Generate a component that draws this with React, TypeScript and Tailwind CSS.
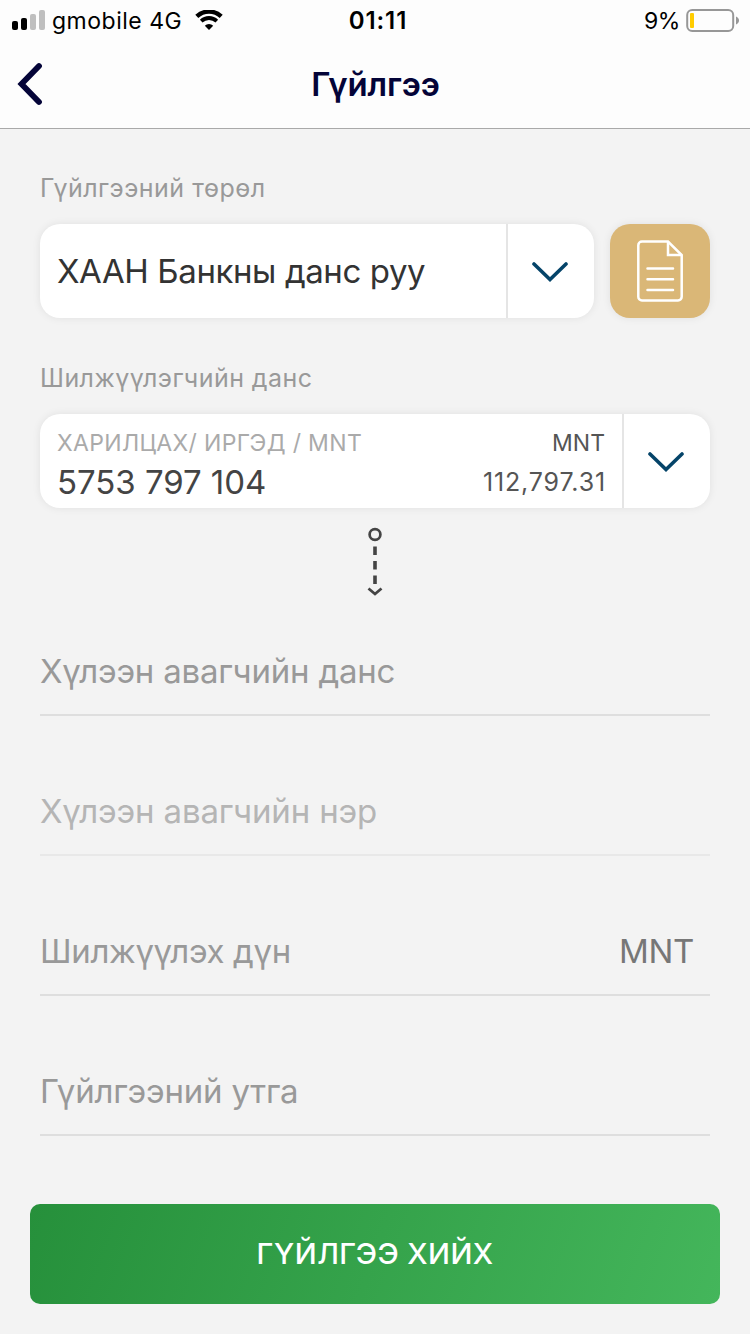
import { clsx } from "clsx";

const FIELDS = [
  { label: "Хүлээн авагчийн данс", suffix: "", muted: false, className: "tracking-[-0.2px]" },
  { label: "Хүлээн авагчийн нэр", suffix: "", muted: true, className: "tracking-[-0.15px]" },
  { label: "Шилжүүлэх дүн", suffix: "MNT", muted: false, className: "tracking-[-0.35px]" },
  { label: "Гүйлгээний утга", suffix: "", muted: false, className: "tracking-[-0.2px]" },
] as const;

function StatusBar() {
  return (
    <div className="grid h-10 grid-cols-3 items-center text-[23px] leading-[38px] text-black">
      <div className="flex items-center pl-3">
        <svg width="33" height="20" viewBox="0 0 33 20">
          <rect x="0" y="11" width="6" height="9" rx="2" fill="#000" />
          <rect x="9" y="8" width="6" height="12" rx="2" fill="#000" />
          <rect x="18" y="4" width="6" height="16" rx="2" fill="#bfbfbf" />
          <rect x="27" y="0" width="6" height="20" rx="2" fill="#bfbfbf" />
        </svg>
        <span className="ml-[7px] whitespace-nowrap pt-0.5 tracking-[0.5px]">gmobile 4G</span>
        <svg className="ml-3" width="30" height="20" viewBox="0 0 30 20">
          <path d="M2.800 6.400a17.800 17.800 0 0 1 24.400 0" fill="none" stroke="#000" strokeWidth="4.400" />
          <path d="M7.200 11.100a11.400 11.400 0 0 1 15.600 0" fill="none" stroke="#000" strokeWidth="3.800" />
          <path d="M15 20l-4.200-4.200a5.900 5.900 0 0 1 8.400 0z" fill="#000" />
        </svg>
      </div>
      <div className="pl-1.5 pt-0.5 text-center text-[24px] font-semibold leading-[38px] tracking-[0.9px]">01:11</div>
      <div className="flex items-center justify-end pr-2.5">
        <span className="mr-1.5 pt-0.5 tracking-[-0.4px]">9%</span>
        <svg width="54" height="24" viewBox="0 0 54 24">
          <rect x="1.200" y="2" width="46" height="21" rx="5" fill="none" stroke="#979797" strokeWidth="2" />
          <rect x="4" y="5" width="4" height="15" rx="1" fill="#ffcc00" />
          <path d="M50 8.500c2 .8 3 2.300 3 4s-1 3.200-3 4z" fill="#979797" />
        </svg>
      </div>
    </div>
  );
}

function Header() {
  return (
    <header className="h-[129px] border-b border-[#a9a9a9] bg-[#fdfdfd]">
      <StatusBar />
      <div className="grid h-[88px] grid-cols-[1fr_auto_1fr] items-center">
        <svg className="ml-4" width="30" height="44" viewBox="0 0 30 44">
          <path d="M23 4L5.500 22 23 40" fill="none" stroke="#040438" strokeWidth="5.800" strokeLinecap="round" strokeLinejoin="miter" />
        </svg>
        <h1 className="pl-px text-[33px] font-semibold leading-[88px] tracking-[-0.1px] text-[#040438]">Гүйлгээ</h1>
      </div>
    </header>
  );
}

function DropdownArrow() {
  return (
    <div className="flex w-[88px] items-center justify-center border-l-2 border-[#e5e5e5] pr-0.5 pt-0.5">
      <svg width="36" height="20" viewBox="0 0 36 20">
        <path d="M2 2l16 15.500L34 2" fill="none" stroke="#054469" strokeWidth="3.600" strokeLinecap="round" strokeLinejoin="miter" />
      </svg>
    </div>
  );
}

function TemplateButton() {
  return (
    <button className="flex h-[94px] w-[100px] items-center justify-center rounded-[20px] bg-[#dab777] shadow-[0_0_8px_rgba(0,0,0,0.08)]">
      <svg width="46" height="62" viewBox="0 0 46 62" fill="none" stroke="#fff" strokeWidth="2.500">
        <path d="M31 1.500H5a3.700 3.700 0 0 0-3.700 3.700v51.600A3.700 3.700 0 0 0 5 60.500h36a3.700 3.700 0 0 0 3.700-3.700V15z" />
        <path d="M31 1.500V15h13.700" />
        <path d="M10.500 28.500h25.500M10.500 39.300h25.500M10.500 50h25.500" strokeLinecap="round" />
      </svg>
    </button>
  );
}

export default function App() {
  return (
    <div className="flex h-[1334px] w-[750px] flex-col overflow-hidden bg-[#f3f3f3] font-['Inter','Liberation_Sans',sans-serif]">
      <Header />

      <main className="flex flex-col px-10">
        <div className="mt-10 h-[55px] text-[25px] leading-[38px] tracking-[0.5px] text-[#999]">Гүйлгээний төрөл</div>
        <div className="flex gap-4">
          <div className="flex h-[94px] w-[554px] rounded-[20px] bg-white shadow-[0_0_8px_rgba(0,0,0,0.08)]">
            <div className="flex-1 whitespace-nowrap pl-[17px] text-[33px] leading-[94px] tracking-[-0.4px] text-[#333]">
              ХААН Банкны данс руу
            </div>
            <DropdownArrow />
          </div>
          <TemplateButton />
        </div>

        <div className="mt-[41px] h-[55px] text-[25px] leading-[38px] tracking-[0.45px] text-[#999]">Шилжүүлэгчийн данс</div>
        <div className="flex h-[94px] rounded-[20px] bg-white shadow-[0_0_8px_rgba(0,0,0,0.08)]">
          <div className="flex flex-1 justify-between whitespace-nowrap pl-[17px] pr-4">
            <div>
              <div className="mt-[9px] h-[39px] text-[23px] leading-10 tracking-[0.33px] text-[#aaa]">ХАРИЛЦАХ/ ИРГЭД / MNT</div>
              <div className="text-[33px] leading-10 tracking-[-0.05px] text-[#444]">5753 797 104</div>
            </div>
            <div className="text-right text-[#555]">
              <div className="mt-[9px] h-[39px] pr-px text-[23px] leading-10">MNT</div>
              <div className="text-[25px] leading-10 tracking-[0.85px]">112,797.31</div>
            </div>
          </div>
          <DropdownArrow />
        </div>

        <svg className="mt-[19px] self-center" width="20" height="72" viewBox="0 0 20 72" fill="none" stroke="#444">
          <circle cx="10" cy="7.500" r="5.400" strokeWidth="2.700" />
          <path d="M10 19.500v8.500M10 34v8.500M10 48.500v8.500" strokeWidth="3.600" />
          <path d="M3.500 61.500l6.500 5.500 6.500-5.500" strokeWidth="2.800" />
        </svg>

        <div className="mt-[25px]">
          {FIELDS.map((field, index) => (
            <div
              key={field.label}
              className={clsx(
                "flex h-[92px] items-center justify-between border-b-2 pr-4 pt-1 text-[33px] leading-10",
                index > 0 && "mt-12",
                field.muted ? "border-[#e8e8e8] text-[#b5b5b5]" : "border-[#dedede] text-[#999]",
                field.className,
              )}
            >
              <span>{field.label}</span>
              {field.suffix && <span className="text-[#777]">{field.suffix}</span>}
            </div>
          ))}
        </div>
      </main>

      <button className="mx-[30px] mt-[68px] h-[100px] rounded-[10px] bg-[linear-gradient(110deg,#26903b,#44b65b)] text-[29px] font-medium leading-[98px] tracking-[0.45px] text-white">
        ГҮЙЛГЭЭ ХИЙХ
      </button>
    </div>
  );
}
